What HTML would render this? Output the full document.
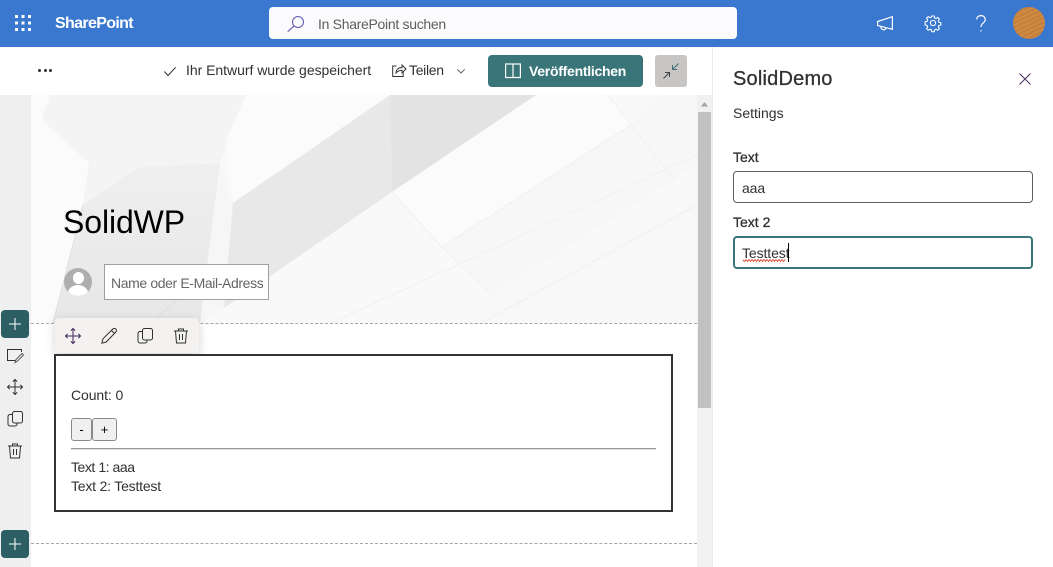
<!DOCTYPE html>
<html lang="de">
<head>
<meta charset="utf-8">
<title>SolidWP</title>
<style>
html,body{margin:0;padding:0;width:1053px;height:567px;overflow:hidden;background:#fff;font-family:"Liberation Sans",sans-serif;color:#323130}
.a{position:absolute;white-space:nowrap}
svg{position:absolute;overflow:visible;fill:none}
.t{font-size:14px;line-height:19px;color:#323130}
</style>
</head>
<body>
<!-- top bar -->
<div class="a" style="left:0;top:0;width:1053px;height:47px;background:#3a78d0"></div>
<svg style="left:15px;top:15px" width="16" height="16">
<g fill="#fff"><rect x="0" y="0" width="3" height="3"/><rect x="6.5" y="0" width="3" height="3"/><rect x="13" y="0" width="3" height="3"/><rect x="0" y="6.5" width="3" height="3"/><rect x="6.5" y="6.5" width="3" height="3"/><rect x="13" y="6.5" width="3" height="3"/><rect x="0" y="13" width="3" height="3"/><rect x="6.5" y="13" width="3" height="3"/><rect x="13" y="13" width="3" height="3"/></g>
</svg>
<div class="a" style="left:55px;top:14px;font-size:16px;line-height:20px;font-weight:700;color:#fff;letter-spacing:-.65px">SharePoint</div>
<div class="a" style="left:269px;top:7px;width:468px;height:32px;background:#fbfbfd;border-radius:4px"></div>
<svg style="left:287px;top:16px" width="17" height="16"><circle cx="11" cy="6" r="5.5" stroke="#5b57b5" stroke-width="1"/><path d="M7 10L.7 15.7" stroke="#7a62b8" stroke-width="1.2"/></svg>
<div class="a" style="left:318px;top:15px;font-size:14px;line-height:18px;color:#605e5c;letter-spacing:-.3px">In SharePoint suchen</div>
<svg style="left:877px;top:16px" width="16" height="14" stroke="#fff" stroke-width="1.2"><path d="M.6 5.500L15.400.700V13.300L.6 9.500Z"/><path d="M4 10.300a2.700 2.700 0 0 0 5.300 1.500"/></svg>
<svg style="left:925px;top:15px" width="16" height="16" stroke="#fff" stroke-width="1.1"><circle cx="8" cy="8" r="2.600"/><path d="M6.700.6h2.600l.4 2.100 1.500.6 1.800-1.200 1.800 1.800-1.200 1.800.6 1.500 2.100.4v2.600l-2.100.4-.6 1.500 1.200 1.800-1.800 1.800-1.800-1.200-1.500.6-.4 2.100H6.700l-.4-2.100-1.500-.6-1.800 1.200-1.800-1.800 1.200-1.800-.6-1.500-2.100-.4V6.700l2.100-.4.6-1.500-1.200-1.800 1.800-1.800 1.800 1.200 1.500-.6z" transform="translate(.4 .4) scale(.95)"/></svg>
<svg style="left:976px;top:15px" width="10" height="17" stroke="#fff" stroke-width="1.2"><path d="M.7 4.500C.7 2 2.500.6 5 .6c2.500 0 4.300 1.600 4.300 3.900C9.300 7.800 5 8 5 12"/><path d="M5 15v1.400"/></svg>
<div class="a" style="left:1013px;top:7px;width:32px;height:32px;border-radius:50%;background:repeating-linear-gradient(155deg,#cf8a42 0 2px,#c47f3c 2px 4px)"></div>

<!-- command bar -->
<div class="a" style="left:38px;top:69px;width:3px;height:3px;border-radius:50%;background:#323130"></div>
<div class="a" style="left:43.500px;top:69px;width:3px;height:3px;border-radius:50%;background:#323130"></div>
<div class="a" style="left:49px;top:69px;width:3px;height:3px;border-radius:50%;background:#323130"></div>
<svg style="left:164px;top:67px" width="12" height="9" stroke="#323130" stroke-width="1"><path d="M.4 4.500l3.600 4L11.600.4"/></svg>
<div class="a t" style="left:186px;top:61px;letter-spacing:-.03px">Ihr Entwurf wurde gespeichert</div>
<svg style="left:392px;top:63px" width="14" height="15" stroke="#323130" stroke-width="1"><path d="M4.500 3H.7v10.500h10.500V9"/><path d="M4 10c0-3.500 2.500-5.500 6-5.500V2l4 4-4 3.800V7.300c-2.800 0-4.500 1-6 2.700z"/></svg>
<div class="a t" style="left:409px;top:61px;letter-spacing:-.3px">Teilen</div>
<svg style="left:457px;top:69px" width="8" height="5" stroke="#605e5c" stroke-width="1"><path d="M.3.3L4 4l3.700-3.700"/></svg>
<div class="a" style="left:488px;top:55px;width:155px;height:32px;background:#3a7679;border-radius:4px"></div>
<svg style="left:505px;top:63px" width="16" height="16" stroke="#fff" stroke-width="1.2"><rect x=".6" y="1" width="14.800" height="13.500"/><path d="M8 1v13.500"/></svg>
<div class="a" style="left:529px;top:62px;font-size:14px;line-height:19px;font-weight:700;color:#fff;letter-spacing:-.27px">Veröffentlichen</div>
<div class="a" style="left:655px;top:55px;width:32px;height:32px;background:#c8c6c4;border-radius:3px"></div>
<svg style="left:663px;top:63px" width="16" height="16" stroke="#3a6f78" stroke-width="1"><path d="M15.500.500L9.500 6.500M9.500 2v4.500H14"/><path d="M.500 15.500l6-6M2 9.500h4.500V14" stroke="#444"/></svg>

<!-- canvas -->
<div class="a" style="left:0;top:95px;width:31px;height:472px;background:#efefef"></div>
<div class="a" style="left:31px;top:95px;width:666px;height:228px;overflow:hidden;background:#f9f9f9">
<svg style="left:0;top:0" width="666" height="228">
<defs><linearGradient id="g" x1="0" y1="0" x2="0" y2="1"><stop offset="0" stop-color="#efefef"/><stop offset="1" stop-color="#e7e7e7"/></linearGradient></defs>
<rect width="666" height="228" fill="#f9f9f9"/>
<path d="M0 0H19L11 25L58 68L52 110L24 228H0Z" fill="#fbfbfb"/>
<path d="M19 0L11 25L58 68L52 110L108 72L189 68L215 0Z" fill="#f4f4f4"/>
<path d="M215 0L195 45L202 108L285 50L359 0Z" fill="#fbfbfb"/>
<path d="M108 72L189 68L169 228H22L52 110Z" fill="url(#g)"/>
<path d="M189 68L202 108L193 213L169 228Z" fill="#f6f6f6"/>
<path d="M359 0L202 108L193 213L361 97Z" fill="#e8e8e8"/>
<path d="M359 0H505L361 97Z" fill="#e3e3e3"/>
<path d="M361 97L411 152L600 30L577 0H505Z" fill="#fbfbfb"/>
<path d="M411 152L461 200L666 70V0H630L600 30Z" fill="#f7f7f7"/>
<path d="M461 200L666 90V228H430Z" fill="#f8f8f8"/>
<path d="M361 97L411 152L461 200M411 152L600 30M600 30L642 83M300 228L666 60M577 0L600 30M450 228L666 110" stroke="#f0f0f0"/>
<path d="M22 228L52 110M120 228L180 175" stroke="#dfdfdf"/>
</svg>
</div>
<div class="a" style="left:63px;top:203px;font-size:32px;line-height:38px;color:#000;letter-spacing:-.1px">SolidWP</div>
<div class="a" style="left:64px;top:268px;width:28px;height:28px;border-radius:50%;background:#aeaeae;overflow:hidden">
<div class="a" style="left:9px;top:4px;width:11px;height:12px;border-radius:50%;background:#fff"></div>
<div class="a" style="left:4px;top:17px;width:20px;height:16px;border-radius:50%;background:#fff"></div>
</div>
<div class="a" style="left:104px;top:264px;width:163px;height:34px;background:#fff;border:1px solid #a19f9d">
<div class="a" style="left:6px;top:9px;width:152px;height:19px;overflow:hidden;font-size:14px;line-height:19px;color:#666;letter-spacing:-.38px">Name oder E-Mail-Adresse</div>
</div>
<!-- scrollbar -->
<div class="a" style="left:697px;top:95px;width:15px;height:472px;background:#f1f1f1"></div>
<div class="a" style="left:698px;top:112px;width:13px;height:296px;background:#c1c1c1"></div>
<svg style="left:701px;top:102px" width="7" height="5"><path d="M0 4.500L3.500 0 7 4.500Z" fill="#a3a3a3"/></svg>
<div class="a" style="left:712px;top:47px;width:1px;height:520px;background:#eaeaea"></div>

<!-- section dashed lines -->
<div class="a" style="left:31px;top:323px;width:666px;border-top:1px dashed #a6a6a6"></div>
<div class="a" style="left:31px;top:543px;width:666px;border-top:1px dashed #a6a6a6"></div>

<!-- plus buttons -->
<div class="a" style="left:1px;top:310px;width:28px;height:28px;background:#2b5f63;border-radius:4px"></div>
<svg style="left:9px;top:318px" width="12" height="12" stroke="#fff" stroke-width="1"><path d="M6 0v12M0 6h12"/></svg>
<div class="a" style="left:1px;top:530px;width:28px;height:28px;background:#2b5f63;border-radius:4px"></div>
<svg style="left:9px;top:538px" width="12" height="12" stroke="#fff" stroke-width="1"><path d="M6 0v12M0 6h12"/></svg>

<!-- left toolbar icons -->
<svg style="left:7px;top:349px" width="16" height="14" stroke="#323130" stroke-width="1"><path d="M9 11.500H.500V.500H14.500V3"/><path d="M8 13.500l1-3L15 4.500l1.500 1.500-6 6z" stroke="#5a5a5a"/></svg>
<svg style="left:7px;top:379px" width="16" height="16" stroke="#323130" stroke-width="1"><path d="M8 .500v15M.500 8h15M5.800 2.700L8 .500l2.200 2.200M5.800 13.300L8 15.500l2.200-2.200M2.700 5.800L.500 8l2.200 2.200M13.300 5.800L15.500 8l-2.200 2.200"/></svg>
<svg style="left:7px;top:411px" width="16" height="16" stroke="#323130" stroke-width="1"><rect x="5.500" y=".500" width="10" height="11.500" rx="2"/><path d="M5.500 3.500H3a2 2 0 0 0-2 2V13a2 2 0 0 0 2 2h5a2 2 0 0 0 2-2v-1"/></svg>
<svg style="left:8px;top:443px" width="14" height="16" stroke="#323130" stroke-width="1"><path d="M0 3h14M4.500 3V1h5v2M1.500 3l1 12h9l1-12M5.500 6v6M8.500 6v6"/></svg>

<!-- web part toolbar -->
<div class="a" style="left:55px;top:318px;width:144px;height:35px;background:#f3f2f1;border-radius:3px;box-shadow:0 3px 10px rgba(0,0,0,.18)"></div>
<svg style="left:65px;top:328px" width="16" height="16" stroke="#42275a" stroke-width="1"><path d="M8 .500v15M.500 8h15M5.800 2.700L8 .500l2.200 2.200M5.800 13.300L8 15.500l2.200-2.200M2.700 5.800L.500 8l2.200 2.200M13.300 5.800L15.500 8l-2.200 2.200"/></svg>
<svg style="left:101px;top:328px" width="16" height="16" stroke="#323130" stroke-width="1"><path d="M.800 15.200l1.200-4.400L11.800 1a1.800 1.800 0 0 1 3 3L5.200 14z"/><path d="M10.500 2.500l3 3"/></svg>
<svg style="left:137px;top:328px" width="16" height="16" stroke="#323130" stroke-width="1"><rect x="5.500" y=".500" width="10" height="11.500" rx="2"/><path d="M5.500 3.500H3a2 2 0 0 0-2 2V13a2 2 0 0 0 2 2h5a2 2 0 0 0 2-2v-1"/></svg>
<svg style="left:174px;top:328px" width="14" height="16" stroke="#323130" stroke-width="1"><path d="M0 3h14M4.500 3V1h5v2M1.500 3l1 12h9l1-12M5.500 6v6M8.500 6v6"/></svg>

<!-- web part -->
<div class="a" style="left:54px;top:354px;width:615px;height:154px;border:2px solid #333;background:#fff"></div>
<div class="a t" style="left:71px;top:386px;letter-spacing:-.1px">Count: 0</div>
<div class="a" style="left:71px;top:418px;width:19px;height:21px;background:#f0f0f0;border:1px solid #8a8a8a;border-radius:3px;font-size:13px;line-height:21px;text-align:center;color:#000">-</div>
<div class="a" style="left:92px;top:418px;width:23px;height:21px;background:#f0f0f0;border:1px solid #8a8a8a;border-radius:3px;font-size:13px;line-height:21px;text-align:center;color:#000">+</div>
<div class="a" style="left:71px;top:448px;width:585px;height:1px;background:#999;box-shadow:0 1px 0 #ddd"></div>
<div class="a t" style="left:71px;top:458px;letter-spacing:-.45px">Text 1: aaa</div>
<div class="a t" style="left:71px;top:477px;letter-spacing:-.2px">Text 2: Testtest</div>

<!-- side panel -->
<div class="a" style="left:733px;top:67px;font-size:20px;line-height:25px;font-weight:400;color:#323130;letter-spacing:.2px;-webkit-text-stroke:.3px #323130">SolidDemo</div>
<svg style="left:1019px;top:73px" width="12" height="12" stroke="#4a3060" stroke-width="1"><path d="M.500.500l11 11M11.500.500l-11 11"/></svg>
<div class="a t" style="left:733px;top:104px">Settings</div>
<div class="a" style="left:733px;top:148px;font-size:14px;line-height:19px;color:#323130;-webkit-text-stroke:.3px #323130">Text</div>
<div class="a" style="left:733px;top:171px;width:298px;height:30px;border:1px solid #605e5c;border-radius:4px;background:#fff"></div>
<div class="a t" style="left:742px;top:179px;letter-spacing:-.1px">aaa</div>
<div class="a" style="left:733px;top:213px;font-size:14px;line-height:19px;color:#323130;-webkit-text-stroke:.3px #323130">Text 2</div>
<div class="a" style="left:733px;top:236px;width:296px;height:29px;border:2px solid #3a7679;border-radius:4px;background:#fff"></div>
<div class="a t" style="left:742px;top:244px;letter-spacing:-.1px">Testtest</div>
<div class="a" style="left:788px;top:243px;width:1px;height:19px;background:#000"></div>
<svg style="left:743px;top:259px" width="45" height="3" stroke="#d9482b" stroke-width=".9"><path d="M0 1l1.500 1.500L3 .500l1.500 2L6 .500l1.500 2L9 .500l1.500 2L12 .500l1.500 2L15 .500l1.500 2L18 .500l1.500 2L21 .500l1.500 2L24 .500l1.500 2L27 .500l1.500 2L30 .500l1.500 2L33 .500l1.500 2L36 .500l1.500 2L39 .500l1.500 2L42 .500"/></svg>
</body>
</html>
